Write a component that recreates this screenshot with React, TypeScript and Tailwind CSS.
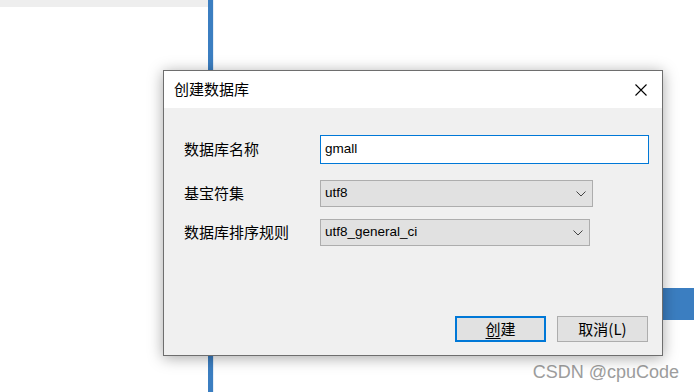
import React from "react";

const cjk = { fontFamily: '"Noto Sans CJK SC", "Noto Sans", sans-serif' };
const latin = { fontFamily: '"Liberation Sans", "Noto Sans CJK SC", sans-serif' };

function Chevron() {
  return (
    <svg width="10" height="6" viewBox="0 0 10 6" className="shrink-0">
      <path d="M0.5 0.5 L5 5 L9.5 0.5" fill="none" stroke="#444" strokeWidth="1" />
    </svg>
  );
}

function Select({ value, width }: { value: string; width: string }) {
  return (
    <div
      className={`${width} h-[27px] border border-[#adadad] bg-[#e1e1e1] flex items-center justify-between pl-[4px] pr-[6px] text-[13.5px] text-black`}
      style={latin}
    >
      <span>{value}</span>
      <Chevron />
    </div>
  );
}

export default function App() {
  return (
    <div className="relative w-[694px] h-[392px] overflow-hidden bg-white flex">
      <div className="w-[208px] flex flex-col">
        <div className="h-[7px] bg-[#eeeeee]" />
      </div>
      <div className="w-[5px] h-full bg-[#3b7ec1]" />
      <div className="w-[1px] h-full bg-[#e6eef6]" />
      <div className="flex-1 flex flex-col">
        <div className="h-[288px]" />
        <div className="h-[32px] w-[80px] self-end bg-[#3b7ec1]" />
        <div
          className="mt-[43px] self-end pr-[15px] text-[18px] leading-[18px] text-[#9d9d9d]"
          style={latin}
        >
          CSDN @cpuCode
        </div>
      </div>

      <div className="absolute left-[163px] top-[70px] w-[500px] h-[286px] border border-[#6e6e6e] bg-[#f0f0f0] flex flex-col shadow-[0_2px_14px_rgba(0,0,0,0.35)]">
        <div className="h-[37px] bg-white flex items-center justify-between pl-[10px] pr-[15px]">
          <span className="text-[15px] text-black" style={cjk}>创建数据库</span>
          <svg width="12" height="12" viewBox="0 0 12 12">
            <path d="M0.5 0.5 L11.5 11.5 M11.5 0.5 L0.5 11.5" stroke="#000" strokeWidth="1.1" />
          </svg>
        </div>
        <div className="flex-1 flex flex-col pl-[20px] pt-[27px]">
          <div className="flex items-center h-[29px]">
            <span className="w-[136px] text-[15px] text-black" style={cjk}>数据库名称</span>
            <div
              className="w-[329px] h-[29px] border border-[#0078d7] bg-white flex items-center pl-[4px] text-[13.5px] text-black"
              style={latin}
            >
              gmall
            </div>
          </div>
          <div className="flex items-center mt-[16px]">
            <span className="w-[136px] text-[15px] text-black" style={cjk}>基宝符集</span>
            <Select value="utf8" width="w-[273px]" />
          </div>
          <div className="flex items-center mt-[12px]">
            <span className="w-[136px] text-[15px] text-black" style={cjk}>数据库排序规则</span>
            <Select value="utf8_general_ci" width="w-[270px]" />
          </div>
          <div className="mt-auto flex justify-end gap-[11px] pr-[14px] pb-[13px]">
            <div
              className="w-[91px] h-[26px] border-2 border-[#0078d7] bg-[#e1e1e1] flex items-center justify-center text-[15px] text-black"
              style={cjk}
            >
              <span className="underline underline-offset-[3px] decoration-1">创</span>
              <span>建</span>
            </div>
            <div
              className="w-[91px] h-[26px] border border-[#adadad] bg-[#e1e1e1] flex items-center justify-center text-[15px] text-black"
              style={cjk}
            >
              取消(L)
            </div>
          </div>
        </div>
      </div>
    </div>
  );
}
